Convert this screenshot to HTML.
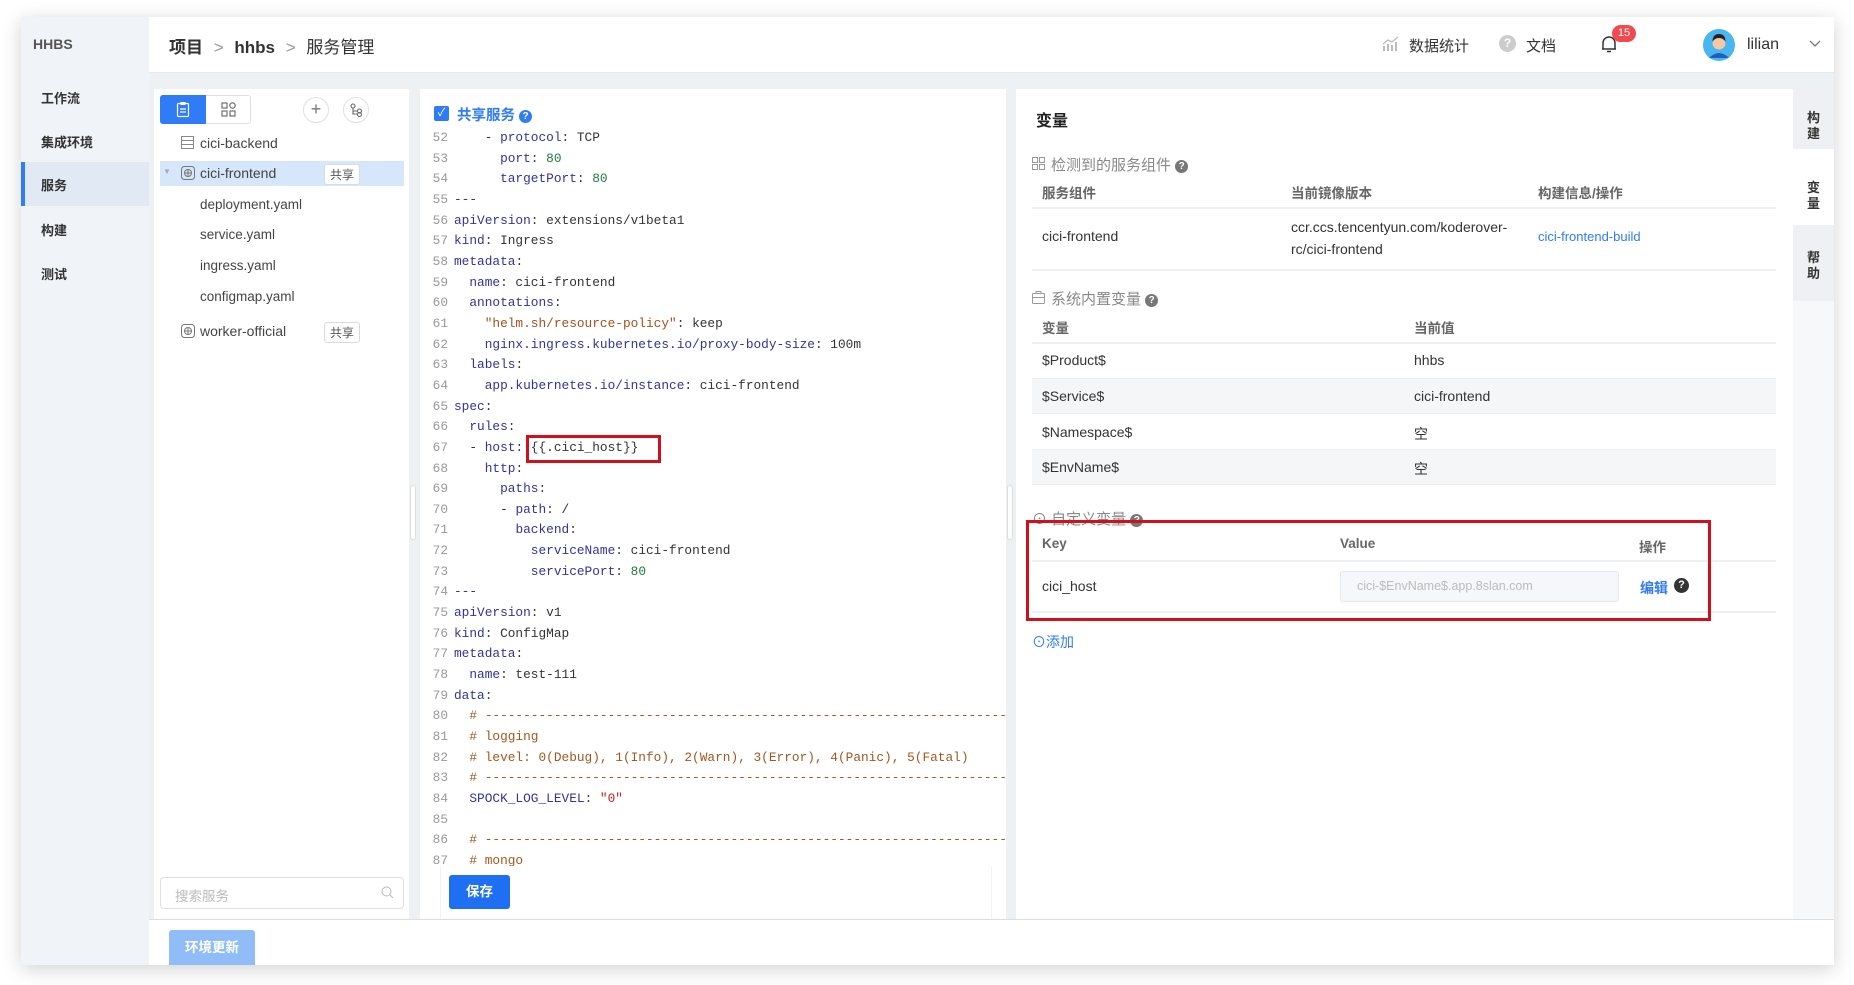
<!DOCTYPE html>
<html><head><meta charset="utf-8">
<style>
*{box-sizing:border-box;margin:0;padding:0}
body{width:1854px;height:985px;background:#fff;font-family:"Liberation Sans","Noto Sans CJK SC",sans-serif;position:relative;overflow:hidden;color:#333}
.a{position:absolute}
#win{left:21px;top:17px;width:1813px;height:948px;background:#eef1f4;box-shadow:0 4px 18px rgba(0,0,0,.18);overflow:hidden}
.side{left:21px;top:17px;width:128px;height:948px;background:#f0f3f7}
.mi{left:21px;width:128px;font-size:13px;font-weight:bold;color:#333;padding-left:20px}
.hdr{left:149px;top:17px;width:1685px;height:56px;background:#fff;border-bottom:1px solid #e6e9ee}
.code{font-family:"Liberation Mono",monospace;font-size:12.8px;line-height:20.66px}
.code div{white-space:pre;height:20.66px}
.k{color:#33339a}.n{color:#1e7a3c}.s{color:#a0521d}.c{color:#a0581e}.r{color:#b22}
.ln{color:#999;display:inline-block;width:28px;text-align:right;margin-right:6px}
.tag{font-size:12px;color:#555;border:1px solid #d8dce2;border-radius:3px;padding:1px 5px;background:#fff}
.th{font-size:13.5px;font-weight:bold;color:#666}
.td{font-size:14px;color:#333}
.sec{font-size:15px;color:#888}
.q{display:inline-block;width:13px;height:13px;border-radius:50%;background:#777;color:#fff;font-size:10px;text-align:center;line-height:13px;font-weight:bold;vertical-align:1px}
.vt{left:1793px;width:41px;font-size:13px;font-weight:bold;color:#333;text-align:center;line-height:16px}
</style></head><body>
<div id="win" class="a"></div>
<div class="a side"></div>
<div class="a" style="left:33px;top:36px;font-size:14px;font-weight:bold;color:#555">HHBS</div>
<div class="a mi" style="top:88px">工作流</div>
<div class="a mi" style="top:132px">集成环境</div>
<div class="a" style="left:21px;top:162px;width:128px;height:44px;background:#e0e9f4;border-left:4px solid #2f7cf6"></div>
<div class="a mi" style="top:175px">服务</div>
<div class="a mi" style="top:220px">构建</div>
<div class="a mi" style="top:264px">测试</div>

<div class="a hdr"></div>
<div class="a" style="left:169px;top:33px;font-size:17px;color:#333"><b>项目</b> <span style="color:#999;margin:0 6px">&gt;</span> <b>hhbs</b> <span style="color:#999;margin:0 6px">&gt;</span> 服务管理</div>
<svg class="a" style="left:1382px;top:36px" width="18" height="16" viewBox="0 0 18 16"><rect x="1" y="10" width="2" height="5" fill="#bbb"/><rect x="5" y="8" width="2" height="7" fill="#bbb"/><rect x="9" y="9" width="2" height="6" fill="#bbb"/><rect x="13" y="6" width="2" height="9" fill="#bbb"/><path d="M1 8 L6 4 L10 6 L16 1" stroke="#bbb" fill="none" stroke-width="1.3"/></svg>
<div class="a" style="left:1409px;top:35px;font-size:15px;color:#333">数据统计</div>
<div class="a" style="left:1499px;top:35px;width:17px;height:17px;border-radius:50%;background:#ccc;color:#fff;font-size:12px;text-align:center;line-height:17px;font-weight:bold">?</div>
<div class="a" style="left:1526px;top:35px;font-size:15px;color:#333">文档</div>
<svg class="a" style="left:1600px;top:34px" width="18" height="20" viewBox="0 0 18 20"><path d="M3 15 V9 a6 6 0 0 1 12 0 V15 H2 H16" stroke="#333" fill="none" stroke-width="1.5"/><path d="M7 17.5 h4" stroke="#333" stroke-width="1.5"/></svg>
<div class="a" style="left:1612px;top:25px;width:24px;height:17px;border-radius:9px;background:#f0494f;color:#fff;font-size:11px;text-align:center;line-height:17px">15</div>
<svg class="a" style="left:1703px;top:29px" width="32" height="32" viewBox="0 0 32 32"><circle cx="16" cy="16" r="16" fill="#4ab6f0"/><path d="M6 29 q10 -10 20 0" fill="#1f5fb8"/><circle cx="16" cy="14" r="6.5" fill="#f4c8a4"/><path d="M9.5 13 q0 -8 6.5 -8 q6.5 0 6.5 8 q-2 -4 -6.5 -4 q-4.5 0 -6.5 4z" fill="#222"/></svg>
<div class="a" style="left:1747px;top:36px;font-size:16px;color:#333">lilian</div>
<svg class="a" style="left:1809px;top:40px" width="12" height="8" viewBox="0 0 12 8"><path d="M1 1 L6 6 L11 1" stroke="#777" fill="none" stroke-width="1.3"/></svg>

<!-- left panel -->
<div class="a" style="left:154px;top:89px;width:255px;height:830px;background:#fff"></div>
<div class="a" style="left:160px;top:95px;width:91px;height:29px;border:1px solid #dde1e6;border-radius:3px;background:#fff"></div>
<div class="a" style="left:160px;top:95px;width:46px;height:29px;background:#2f7cf6;border-radius:3px 0 0 3px"></div>
<svg class="a" style="left:176px;top:101px" width="14" height="17" viewBox="0 0 14 17"><rect x="1.5" y="2.5" width="11" height="13" rx="1" stroke="#fff" fill="none" stroke-width="1.2"/><rect x="4.5" y="1" width="5" height="3" fill="#fff"/><path d="M4 8h6M4 11h6" stroke="#fff" stroke-width="1.2"/></svg>
<svg class="a" style="left:221px;top:102px" width="15" height="15" viewBox="0 0 15 15"><g stroke="#666" fill="none" stroke-width="1.1"><rect x="1" y="1" width="5" height="5"/><rect x="1" y="9" width="5" height="5"/><rect x="9" y="9" width="5" height="5"/><circle cx="11.5" cy="3.5" r="2.7"/></g></svg>
<div class="a" style="left:303px;top:97px;width:26px;height:26px;border:1px solid #dde1e6;border-radius:50%;text-align:center;line-height:23px;font-size:18px;color:#777">+</div>
<div class="a" style="left:343px;top:97px;width:26px;height:26px;border:1px solid #dde1e6;border-radius:50%"></div>
<svg class="a" style="left:350px;top:103px" width="13" height="14" viewBox="0 0 13 14"><g stroke="#666" fill="none" stroke-width="1.1"><circle cx="3" cy="3" r="2"/><path d="M3 5v6h4M3 8h4"/><circle cx="9.5" cy="8" r="2"/><circle cx="9.5" cy="11.5" r="2"/></g></svg>
<svg class="a" style="left:181px;top:136px" width="13" height="13" viewBox="0 0 13 13"><g stroke="#888" fill="none"><rect x="0.5" y="0.5" width="12" height="12"/><path d="M0.5 4.5h12M0.5 8.5h12"/></g></svg>
<div class="a" style="left:200px;top:135px;font-size:14px;color:#444">cici-backend</div>
<div class="a" style="left:160px;top:161px;width:244px;height:25px;background:#d6e6fb"></div>
<div class="a" style="left:163px;top:167px;font-size:8px;color:#aaa">▼</div>
<svg class="a" style="left:181px;top:166px" width="14" height="14" viewBox="0 0 14 14"><g stroke="#777" fill="none"><rect x="0.5" y="0.5" width="13" height="13" rx="3"/><circle cx="7" cy="7" r="3.5"/><path d="M7 3.5v7M3.5 7h7"/></g></svg>
<div class="a" style="left:200px;top:165px;font-size:14px;color:#444">cici-frontend</div>
<div class="a tag" style="left:324px;top:164px">共享</div>
<div class="a" style="left:200px;top:197px;font-size:13.5px;color:#444">deployment.yaml</div>
<div class="a" style="left:200px;top:227px;font-size:13.5px;color:#444">service.yaml</div>
<div class="a" style="left:200px;top:258px;font-size:13.5px;color:#444">ingress.yaml</div>
<div class="a" style="left:200px;top:289px;font-size:13.5px;color:#444">configmap.yaml</div>
<svg class="a" style="left:181px;top:324px" width="14" height="14" viewBox="0 0 14 14"><g stroke="#777" fill="none"><rect x="0.5" y="0.5" width="13" height="13" rx="3"/><circle cx="7" cy="7" r="3.5"/><path d="M7 3.5v7M3.5 7h7"/></g></svg>
<div class="a" style="left:200px;top:323px;font-size:14px;color:#444">worker-official</div>
<div class="a tag" style="left:324px;top:322px">共享</div>
<div class="a" style="left:160px;top:877px;width:244px;height:32px;border:1px solid #dcdfe6;border-radius:4px;background:#fff"></div>
<div class="a" style="left:175px;top:885px;font-size:13.5px;color:#bbb">搜索服务</div>
<svg class="a" style="left:381px;top:886px" width="13" height="13" viewBox="0 0 13 13"><circle cx="5.5" cy="5.5" r="4.5" stroke="#bbb" fill="none"/><path d="M9 9l3 3" stroke="#bbb"/></svg>
<div class="a" style="left:410px;top:485px;width:6px;height:55px;border:1px solid #ddd;border-radius:3px;background:#fff"></div>

<!-- editor -->
<div class="a" style="left:420px;top:89px;width:586px;height:830px;background:#fff"></div>
<div class="a code" style="left:420px;top:128px;width:586px;height:738px;overflow:hidden"><div><span class="ln">52</span>    - <span class="k">protocol</span>: TCP</div><div><span class="ln">53</span>      <span class="k">port</span>: <span class="n">80</span></div><div><span class="ln">54</span>      <span class="k">targetPort</span>: <span class="n">80</span></div><div><span class="ln">55</span><span class="k">---</span></div><div><span class="ln">56</span><span class="k">apiVersion</span>: extensions/v1beta1</div><div><span class="ln">57</span><span class="k">kind</span>: Ingress</div><div><span class="ln">58</span><span class="k">metadata</span>:</div><div><span class="ln">59</span>  <span class="k">name</span>: cici-frontend</div><div><span class="ln">60</span>  <span class="k">annotations</span>:</div><div><span class="ln">61</span>    <span class="s">"helm.sh/resource-policy"</span>: keep</div><div><span class="ln">62</span>    <span class="k">nginx.ingress.kubernetes.io/proxy-body-size</span>: 100m</div><div><span class="ln">63</span>  <span class="k">labels</span>:</div><div><span class="ln">64</span>    <span class="k">app.kubernetes.io/instance</span>: cici-frontend</div><div><span class="ln">65</span><span class="k">spec</span>:</div><div><span class="ln">66</span>  <span class="k">rules</span>:</div><div><span class="ln">67</span>  - <span class="k">host</span>: {{.cici_host}}</div><div><span class="ln">68</span>    <span class="k">http</span>:</div><div><span class="ln">69</span>      <span class="k">paths</span>:</div><div><span class="ln">70</span>      - <span class="k">path</span>: /</div><div><span class="ln">71</span>        <span class="k">backend</span>:</div><div><span class="ln">72</span>          <span class="k">serviceName</span>: cici-frontend</div><div><span class="ln">73</span>          <span class="k">servicePort</span>: <span class="n">80</span></div><div><span class="ln">74</span><span class="k">---</span></div><div><span class="ln">75</span><span class="k">apiVersion</span>: v1</div><div><span class="ln">76</span><span class="k">kind</span>: ConfigMap</div><div><span class="ln">77</span><span class="k">metadata</span>:</div><div><span class="ln">78</span>  <span class="k">name</span>: test-111</div><div><span class="ln">79</span><span class="k">data</span>:</div><div><span class="ln">80</span>  <span class="c"># ------------------------------------------------------------------------</span></div><div><span class="ln">81</span>  <span class="c"># logging</span></div><div><span class="ln">82</span>  <span class="c"># level: 0(Debug), 1(Info), 2(Warn), 3(Error), 4(Panic), 5(Fatal)</span></div><div><span class="ln">83</span>  <span class="c"># ------------------------------------------------------------------------</span></div><div><span class="ln">84</span>  <span class="k">SPOCK_LOG_LEVEL</span>: <span class="r">"0"</span></div><div><span class="ln">85</span></div><div><span class="ln">86</span>  <span class="c"># ------------------------------------------------------------------------</span></div><div><span class="ln">87</span>  <span class="c"># mongo</span></div></div>
<div class="a" style="left:526px;top:435px;width:135px;height:28px;border:3px solid #d0101b"></div>
<div class="a" style="left:420px;top:100px;width:586px;height:28px;background:#fff"></div>
<div class="a" style="left:434px;top:106px;width:15px;height:15px;background:#2f7cf6;border-radius:2px;color:#fff;font-size:11px;text-align:center;line-height:15px">✓</div>
<div class="a" style="left:457px;top:104px;font-size:14.5px;color:#2f7cf6;font-weight:bold">共享服务 <span class="q" style="background:#2f7cf6">?</span></div>
<div class="a" style="left:440px;top:866px;width:552px;height:53px;background:#fff;border-left:1px solid #f2f2f2;border-right:1px solid #f2f2f2"></div>
<div class="a" style="left:449px;top:875px;width:61px;height:34px;background:#1f6ff2;border-radius:3px;color:#fff;font-size:13.5px;font-weight:bold;text-align:center;line-height:34px">保存</div>
<div class="a" style="left:1007px;top:485px;width:6px;height:55px;border:1px solid #ddd;border-radius:3px;background:#fff"></div>

<!-- right panel -->
<div class="a" style="left:1016px;top:89px;width:777px;height:830px;background:#fff"></div>
<div class="a" style="left:1036px;top:107px;font-size:16px;font-weight:bold;color:#222">变量</div>
<svg class="a" style="left:1032px;top:157px" width="13" height="13" viewBox="0 0 13 13"><g stroke="#999" fill="none"><rect x="0.5" y="0.5" width="5" height="5"/><rect x="7.5" y="0.5" width="5" height="5"/><rect x="0.5" y="7.5" width="5" height="5"/><rect x="7.5" y="7.5" width="5" height="5"/></g></svg>
<div class="a sec" style="left:1051px;top:154px">检测到的服务组件 <span class="q">?</span></div>
<div class="a th" style="left:1042px;top:182px">服务组件</div>
<div class="a th" style="left:1291px;top:182px">当前镜像版本</div>
<div class="a th" style="left:1538px;top:182px">构建信息/操作</div>
<div class="a" style="left:1032px;top:207px;width:744px;height:2px;background:#eef0f3"></div>
<div class="a td" style="left:1042px;top:228px">cici-frontend</div>
<div class="a td" style="left:1291px;top:216px;line-height:22px">ccr.ccs.tencentyun.com/koderover-<br>rc/cici-frontend</div>
<div class="a" style="left:1538px;top:229px;font-size:13px;color:#2f7cf6">cici-frontend-build</div>
<div class="a" style="left:1032px;top:269px;width:744px;height:2px;background:#eef0f3"></div>

<svg class="a" style="left:1032px;top:291px" width="13" height="13" viewBox="0 0 13 13"><g stroke="#999" fill="none"><rect x="0.5" y="2.5" width="12" height="10" rx="1"/><path d="M4 2.5V0.5h5v2M0.5 6.5h12"/></g></svg>
<div class="a sec" style="left:1051px;top:288px">系统内置变量 <span class="q">?</span></div>
<div class="a th" style="left:1042px;top:317px">变量</div>
<div class="a th" style="left:1414px;top:317px">当前值</div>
<div class="a" style="left:1032px;top:342px;width:744px;height:2px;background:#eef0f3"></div>
<div class="a" style="left:1032px;top:378px;width:744px;height:36px;background:#f5f6f7;border-top:1px solid #eee;border-bottom:1px solid #eee"></div>
<div class="a" style="left:1032px;top:449px;width:744px;height:36px;background:#f5f6f7;border-top:1px solid #eee;border-bottom:1px solid #eee"></div>
<div class="a td" style="left:1042px;top:352px">$Product$</div><div class="a td" style="left:1414px;top:352px">hhbs</div>
<div class="a td" style="left:1042px;top:388px">$Service$</div><div class="a td" style="left:1414px;top:388px">cici-frontend</div>
<div class="a td" style="left:1042px;top:424px">$Namespace$</div><div class="a td" style="left:1414px;top:424px">空</div>
<div class="a td" style="left:1042px;top:459px">$EnvName$</div><div class="a td" style="left:1414px;top:459px">空</div>

<div class="a sec" style="left:1032px;top:508px">⊙ 自定义变量 <span class="q">?</span></div>
<div class="a th" style="left:1042px;top:536px">Key</div>
<div class="a th" style="left:1340px;top:536px">Value</div>
<div class="a th" style="left:1639px;top:536px">操作</div>
<div class="a" style="left:1032px;top:560px;width:744px;height:2px;background:#eef0f3"></div>
<div class="a td" style="left:1042px;top:578px">cici_host</div>
<div class="a" style="left:1340px;top:571px;width:279px;height:31px;background:#f5f7fa;border:1px solid #e4e7ed;border-radius:3px;font-size:12.5px;color:#bbb;padding:7px 0 0 16px">cici-$EnvName$.app.8slan.com</div>
<div class="a" style="left:1640px;top:578px;font-size:14px;color:#2f7cf6;font-weight:bold">编辑</div>
<div class="a" style="left:1674px;top:578px;width:15px;height:15px;border-radius:50%;background:#333;color:#fff;font-size:11px;text-align:center;line-height:15px;font-weight:bold">?</div>
<div class="a" style="left:1032px;top:611px;width:744px;height:2px;background:#eef0f3"></div>
<div class="a" style="left:1026px;top:520px;width:685px;height:101px;border:3px solid #d0101b"></div>
<div class="a" style="left:1032px;top:632px;font-size:14px;color:#2f7cf6">⊙添加</div>

<!-- vertical tabs -->
<div class="a" style="left:1793px;top:89px;width:41px;height:830px;background:#f7f8fa"></div>
<div class="a" style="left:1793px;top:89px;width:41px;height:60px;background:#eef0f3"></div>
<div class="a" style="left:1793px;top:149px;width:41px;height:76px;background:#fff"></div>
<div class="a" style="left:1793px;top:225px;width:41px;height:76px;background:#eef0f3"></div>
<div class="a vt" style="top:110px">构<br>建</div>
<div class="a vt" style="top:180px">变<br>量</div>
<div class="a vt" style="top:250px">帮<br>助</div>

<!-- bottom bar -->
<div class="a" style="left:149px;top:919px;width:1685px;height:46px;background:#fff;border-top:1px solid #ddd"></div>
<div class="a" style="left:169px;top:930px;width:86px;height:35px;background:#90bdf7;border-radius:3px 3px 0 0;color:#fff;font-size:13.5px;font-weight:bold;text-align:center;line-height:36px">环境更新</div>
</body></html>
